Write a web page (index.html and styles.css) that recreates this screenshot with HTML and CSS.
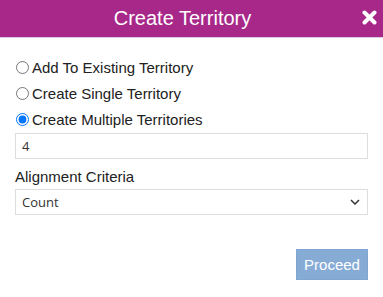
FILE: index.html
```html
<!DOCTYPE html>
<html lang="en">
<head>
    <meta charset="UTF-8" />
    <title>Create Territory</title>
    <link rel="stylesheet" href="styles.css">
</head>
<body>
    <div class="dialog">
        <div class="header">
            <h1>Create Territory</h1>
            <svg class="close" width="15" height="15" viewBox="0 0 15 15"><path d="M2.5 2.5 L12.5 12.5 M12.5 2.5 L2.5 12.5" stroke="#fff" stroke-width="4" stroke-linecap="round"/></svg>
        </div>
        <div class="content">
            <label class="option"><input type="radio" name="mode"> Add To Existing Territory</label>
            <label class="option"><input type="radio" name="mode"> Create Single Territory</label>
            <label class="option"><input type="radio" name="mode" checked> Create Multiple Territories</label>
            <input type="text" class="field" value="4">
            <div class="label">Alignment Criteria</div>
            <div class="select-box">
                <span>Count</span>
                <svg width="10" height="6" viewBox="0 0 10 6"><path d="M1 1 L5 5 L9 1" fill="none" stroke="#333" stroke-width="1.5"/></svg>
            </div>
            <div class="actions">
                <button>Proceed</button>
            </div>
        </div>
    </div>
</body>
</html>
```

FILE: styles.css
```css
body {
    margin: 0;
    font-family: 'Liberation Sans', Arial, sans-serif;
    background: #fff;
}
.dialog {
    width: 383px;
    height: 297px;
}
.header {
    height: 37px;
    background: #a8288a;
    border-bottom: 1px solid #dccbe3;
    display: flex;
    align-items: center;
    justify-content: center;
    padding-right: 18px;
    position: relative;
}
.header h1 {
    margin: 0;
    color: #fff;
    font-size: 20px;
    font-weight: normal;
}
.close {
    position: absolute;
    right: 6px;
    top: 10px;
}
.content {
    padding: 16px 15px 0 15px;
}
.option {
    display: flex;
    align-items: center;
    height: 26px;
    font-size: 15px;
    color: #222;
}
.option input {
    margin: 0 3px 0 1px;
    width: 13px;
    height: 13px;
}
.field {
    display: block;
    box-sizing: border-box;
    width: 353px;
    height: 26px;
    margin-top: 1px;
    border: 1px solid #ddd;
    padding: 0 6px;
    font-family: 'Open Sans', sans-serif;
    font-size: 13px;
    color: #333;
}
.label {
    margin-top: 9px;
    font-size: 15px;
    color: #222;
}
.select-box {
    box-sizing: border-box;
    width: 353px;
    height: 26px;
    margin-top: 4px;
    border: 1px solid #ddd;
    padding: 0 7px 0 6px;
    display: flex;
    align-items: center;
    justify-content: space-between;
    font-family: 'Open Sans', sans-serif;
    font-size: 13px;
    color: #333;
}
.actions {
    display: flex;
    justify-content: flex-end;
    margin-top: 34px;
}
button {
    width: 72px;
    height: 31px;
    background: #86acd6;
    color: #fff;
    border: 1px solid #7ea6d2;
    font-family: 'Liberation Sans', Arial, sans-serif;
    font-size: 15px;
    padding: 0;
}
```
